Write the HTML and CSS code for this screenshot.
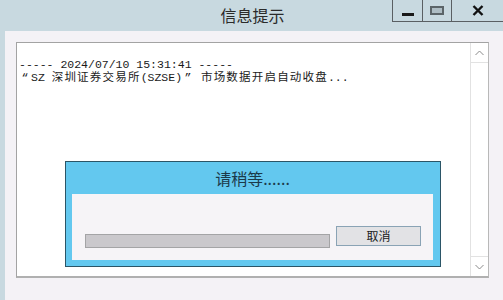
FILE: index.html
```html
<!DOCTYPE html>
<html>
<head>
<meta charset="utf-8">
<link rel="stylesheet" href="styles.css">
</head>
<body>
<div class="window">
  <div class="titlebar">
    <div class="spacer"></div>
    <div class="title">信息提示</div>
    <div class="caption">
      <div class="cbtn cmin"><span class="min-bar"></span></div>
      <div class="cbtn cmax"><span class="max-box"></span></div>
      <div class="cbtn cclose">
        <svg width="12" height="11" viewBox="0 0 12 11"><path d="M1.5 1 L10.5 10 M10.5 1 L1.5 10" stroke="#111" stroke-width="2.4" fill="none"/></svg>
      </div>
    </div>
  </div>
  <div class="client">
    <div class="textbox">
      <div class="text">
        <div class="line">----- 2024/07/10 15:31:41 -----</div>
        <div class="line"><span class="q">“</span>SZ <span class="cjk">深圳证券交易所</span>(SZSE)<span class="q">”</span> <span class="cjk">市场数据开启自动收盘</span>...</div>
      </div>
      <div class="scrollbar">
        <div class="sbtn">
          <svg width="9" height="6" viewBox="0 0 9 6"><path d="M0.5 5 L4.5 1 L8.5 5" stroke="#8a8a8a" stroke-width="1" fill="none"/></svg>
        </div>
        <div class="track"></div>
        <div class="sbtn">
          <svg width="9" height="6" viewBox="0 0 9 6"><path d="M0.5 1 L4.5 5 L8.5 1" stroke="#8a8a8a" stroke-width="1" fill="none"/></svg>
        </div>
      </div>
    </div>
  </div>
</div>
<div class="dialog">
  <div class="dtitle">请稍等......</div>
  <div class="dbody">
    <div class="progress"></div>
    <div class="cancel">取消</div>
  </div>
</div>
</body>
</html>
```
FILE: styles.css
```css
html, body {
  margin: 0;
  padding: 0;
}
body {
  width: 503px;
  height: 300px;
  overflow: hidden;
  background: #c8d9e0;
  position: relative;
  font-family: "Noto Sans CJK SC", sans-serif;
}
.window {
  display: flex;
  flex-direction: column;
  height: 300px;
}
.titlebar {
  height: 31px;
  display: grid;
  grid-template-columns: 1fr auto 1fr;
  align-items: start;
}
.title {
  font-size: 16px;
  line-height: 31px;
  color: #2a2a2a;
  padding-left: 2px;
}
.caption {
  justify-self: end;
  display: flex;
  height: 22px;
}
.cbtn {
  height: 21px;
  border-bottom: 1px solid #5a5f63;
  border-left: 1px solid #5a5f63;
  display: flex;
  align-items: center;
  justify-content: center;
  box-sizing: content-box;
}
.cmin { width: 29px; }
.cmax { width: 28px; }
.cclose { width: 50px; padding-left: 1px; }
.min-bar {
  display: block;
  width: 12px;
  height: 3px;
  background: #1a1a1a;
  margin-top: 7px;
}
.max-box {
  display: block;
  width: 10px;
  height: 5px;
  border: 2px solid #5b6468;
  background: #aebdc4;
  margin-top: -1px;
}
.client {
  flex: 1;
  margin-left: 5px;
  background: #f4f2f6;
  padding: 11px 0 0 11px;
}
.textbox {
  width: 471px;
  height: 233px;
  border: 1px solid #a3a3a3;
  border-right-color: #b8b8b8;
  border-bottom: 2px solid #b0b0b0;
  background: #ffffff;
  display: flex;
}
.text {
  flex: 1;
  padding: 15px 0 0 2px;
  font-family: "Liberation Mono", "Noto Sans CJK SC", monospace;
  font-size: 11.5px;
  line-height: 13px;
  color: #1a1a1a;
}
.line {
  white-space: pre;
}
.cjk {
  letter-spacing: 1.2px;
}
.q {
  display: inline-block;
  width: 12px;
  text-align: center;
}
.scrollbar {
  width: 17px;
  border-left: 1px solid #e2e2e2;
  display: flex;
  flex-direction: column;
  background: #ffffff;
}
.sbtn {
  height: 19px;
  display: flex;
  align-items: center;
  justify-content: center;
  border-bottom: 1px solid #e2e2e2;
}
.sbtn:last-child {
  border-bottom: none;
  border-top: 1px solid #e2e2e2;
}
.track {
  flex: 1;
}
.dialog {
  position: absolute;
  left: 65px;
  top: 161px;
  width: 361px;
  border: 1px solid #2b5567;
  background: #63c8ef;
  padding: 0 7px 6px 6px;
}
.dtitle {
  height: 32px;
  line-height: 33px;
  text-align: center;
  font-size: 16px;
  color: #1c3a4a;
}
.dbody {
  height: 66px;
  background: #f6f4f7;
  display: flex;
  align-items: flex-start;
  padding: 0 0 0 13px;
  box-sizing: border-box;
}
.progress {
  width: 243px;
  height: 12px;
  margin-top: 40px;
  background: #cac8cc;
  border: 1px solid #a4a4a6;
}
.cancel {
  margin-left: 6px;
  margin-top: 32px;
  width: 83px;
  height: 18px;
  border: 1px solid #8aa3b5;
  background: #e2e2e5;
  font-size: 12px;
  line-height: 18px;
  text-align: center;
  color: #202020;
}
```
